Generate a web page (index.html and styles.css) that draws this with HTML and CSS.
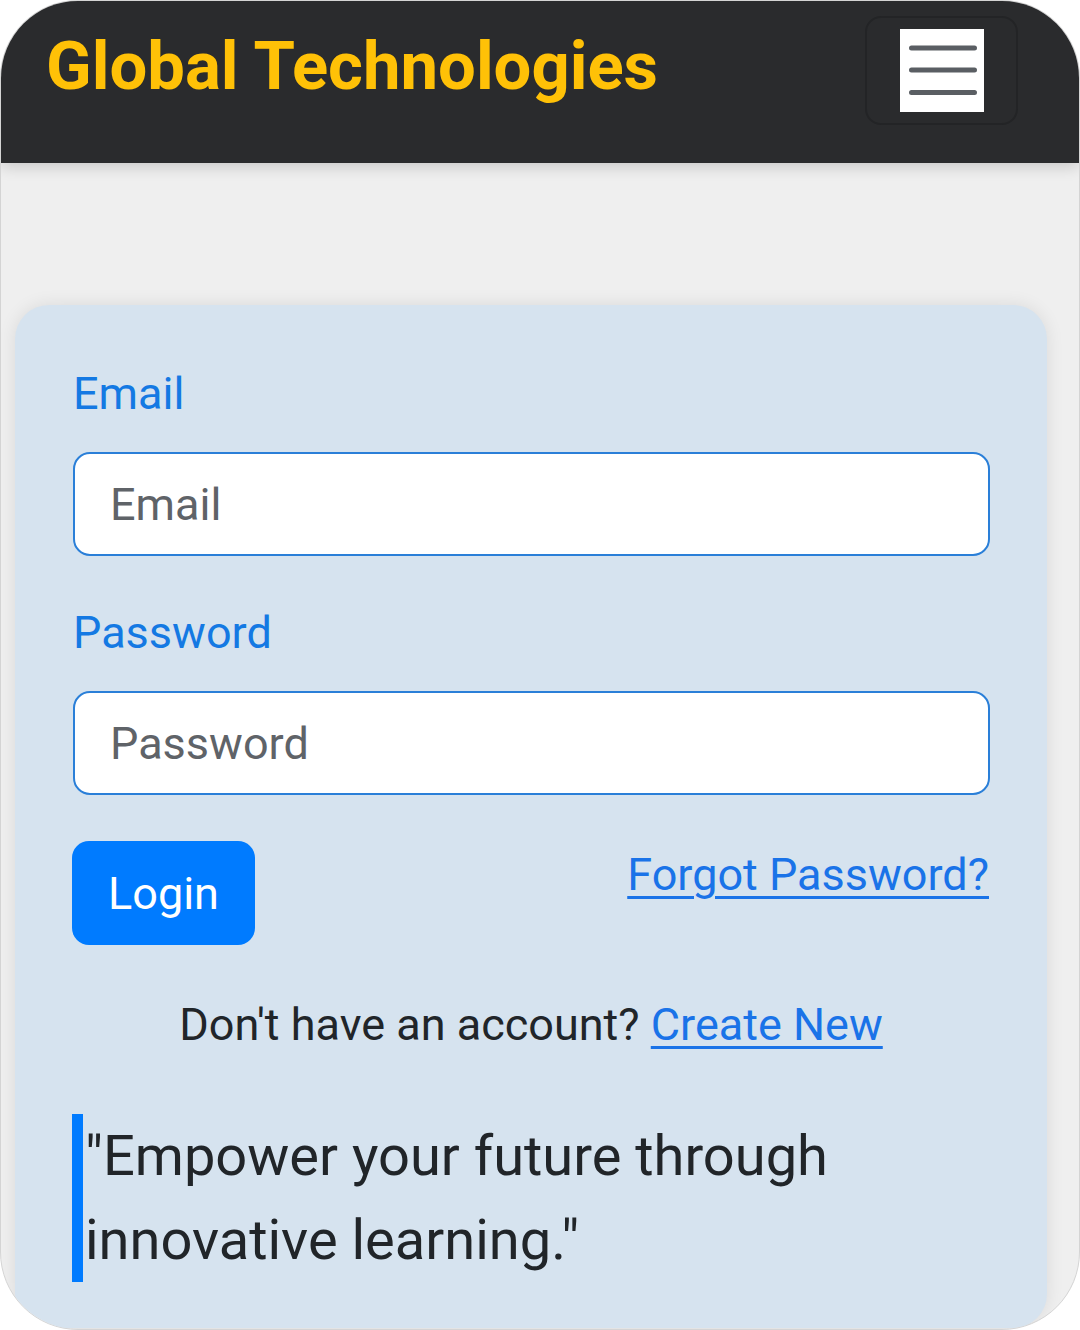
FILE: index.html
```html
<!DOCTYPE html>
<html lang="en">
<head>
<meta charset="utf-8">
<title>Global Technologies - Login</title>
<link rel="stylesheet" href="styles.css">
</head>
<body>
<div class="screen">
  <header class="navbar">
    <span class="brand">Global Technologies</span>
    <button class="toggler" type="button" aria-label="Toggle navigation">
      <span class="toggler-icon">
        <svg width="84" height="84" viewBox="0 0 84 84" aria-hidden="true">
          <path d="M11.5 20H74.5M11.5 42H74.5M11.5 64.5H74.5" stroke="#5a5e63" stroke-width="5" stroke-linecap="round" fill="none"/>
        </svg>
      </span>
    </button>
  </header>
  <main class="content">
    <section class="card">
      <form class="login-form">
        <div class="field">
          <label class="label" for="email">Email</label>
          <input class="input" id="email" type="email" placeholder="Email">
        </div>
        <div class="field">
          <label class="label" for="password">Password</label>
          <input class="input" id="password" type="password" placeholder="Password">
        </div>
        <div class="actions">
          <button class="btn" type="button">Login</button>
          <a class="link" href="#">Forgot Password?</a>
        </div>
        <p class="signup">Don't have an account? <a class="link" href="#">Create New</a></p>
        <blockquote class="quote">"Empower your future through innovative learning."</blockquote>
      </form>
    </section>
  </main>
</div>
</body>
</html>
```
FILE: styles.css
```css
* { box-sizing: border-box; }
html, body {
  margin: 0;
  padding: 0;
  background: #ffffff;
}
body {
  font-family: Roboto, "Liberation Sans", Arial, sans-serif;
  color: #212529;
}
.screen {
  width: 1080px;
  height: 1330px;
  border: 1px solid #d4d4d4;
  border-radius: 78px;
  overflow: hidden;
  background: #efefef;
  display: flex;
  flex-direction: column;
}
.navbar {
  height: 162px;
  flex: none;
  background: #2a2b2d;
  display: flex;
  align-items: center;
  justify-content: space-between;
  padding: 0 61px 24px 45px;
  box-shadow: 0 4px 14px rgba(0, 0, 0, 0.16);
  position: relative;
  z-index: 1;
}
.brand {
  font-size: 67px;
  font-weight: 700;
  color: #ffc107;
  line-height: 1;
  margin-bottom: 8px;
}
.toggler {
  width: 153px;
  height: 109px;
  border: 2px solid #232426;
  border-radius: 16px;
  background: transparent;
  display: flex;
  align-items: center;
  justify-content: center;
  padding: 0;
}
.toggler-icon {
  width: 84px;
  height: 83px;
  background: #ffffff;
  display: flex;
  align-items: center;
  justify-content: center;
}
.content {
  flex: 1;
  padding: 142px 32px 0 14px;
}
.card {
  background: #d6e3ef;
  border-radius: 34px;
  padding: 55px 57px 46px 57px;
  box-shadow: 0 0 18px rgba(0, 0, 0, 0.09);
}
.login-form {
  display: flex;
  flex-direction: column;
}
.field {
  display: flex;
  flex-direction: column;
  margin-bottom: 43px;
}
.label {
  font-size: 45px;
  line-height: 68px;
  color: #1479e3;
  margin-bottom: 24px;
  padding-left: 1px;
}
.input {
  height: 104px;
  border: 2px solid #2a7fd8;
  border-radius: 17px;
  background: #ffffff;
  font-family: inherit;
  font-size: 45px;
  color: #212529;
  padding: 0 35px;
  margin-left: 1px;
  outline: none;
}
.input::placeholder {
  color: #5f6368;
  opacity: 1;
}
.field:nth-child(2) { margin-bottom: 46px; }
.actions {
  display: flex;
  justify-content: space-between;
  align-items: flex-start;
  padding-right: 1px;
}
.btn {
  height: 104px;
  padding: 0 36px;
  border: none;
  border-radius: 17px;
  background: #007bff;
  color: #ffffff;
  font-family: inherit;
  font-size: 45px;
  line-height: 1;
}
.link {
  font-size: 45px;
  line-height: 68px;
  color: #1a73e8;
  text-decoration: underline;
  text-decoration-thickness: 3px;
  text-underline-offset: 6px;
}
.signup {
  margin: 46px 0 0;
  text-align: center;
  font-size: 45px;
  line-height: 68px;
  color: #212529;
}
.quote {
  margin: 55px 0 0;
  padding: 0 0 0 2px;
  border-left: 11px solid #007bff;
  font-size: 56px;
  line-height: 84px;
  color: #212529;
}
```
